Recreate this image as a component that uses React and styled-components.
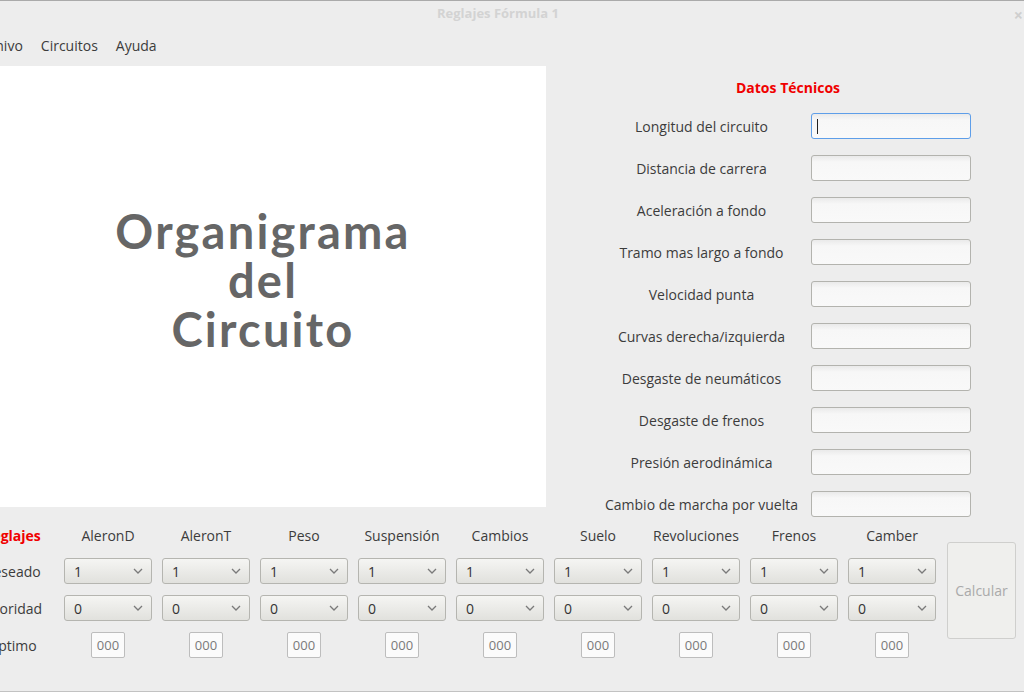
import React from 'react';
import styled, {createGlobalStyle, css} from 'styled-components';

const GlobalStyle = createGlobalStyle`
	html, body {
		margin: 0;
		padding: 0;
		background: #ededed;
		overflow: hidden;
	}
	* {
		box-sizing: border-box;
	}
`;

const Window = styled.div`
	width: 1024px;
	height: 692px;
	display: flex;
	flex-direction: column;
	background: #ededed;
	border-top: 1px solid #aaaaaa;
	border-bottom: 1px solid #c2c2c2;
	font-family: "Open Sans", "Noto Sans", sans-serif;
	font-size: 13px;
	color: #3c3c3c;
	overflow: hidden;
`;

const TitleBar = styled.div`
	position: relative;
	height: 27px;
	flex: 0 0 27px;
	display: flex;
	align-items: center;
	justify-content: center;
	padding-right: 28px;
	padding-bottom: 3px;
	font-weight: 700;
	font-size: 13px;
	color: #d3d3d3;
`;

const Close = styled.span`
	position: absolute;
	right: 1px;
	top: 3px;
	font-size: 16px;
	font-weight: 700;
	color: #cfcfcf;
`;

const MenuBar = styled.div`
	height: 35px;
	flex: 0 0 35px;
	display: flex;
	align-items: center;
	gap: 18px;
	margin-left: -26px;
	font-size: 14px;
`;

const Main = styled.div`
	display: flex;
	height: 441px;
	flex: 0 0 441px;
	margin-top: 3px;
`;

const Canvas = styled.div`
	width: 546px;
	flex: 0 0 546px;
	background: #ffffff;
	display: flex;
	align-items: center;
	justify-content: center;
`;

const Logo = styled.div`
	font-family: Lato, "Open Sans", sans-serif;
	font-weight: 700;
	font-size: 47px;
	line-height: 49px;
	letter-spacing: 2.2px;
	text-align: center;
	color: #666666;
	margin-top: -12px;
	margin-left: -20px;
`;

const Datos = styled.div`
	display: grid;
	grid-template-columns: 215px 160px;
	grid-template-rows: 19px repeat(10, 26px);
	row-gap: 16px;
	align-items: center;
	margin-left: 50px;
	padding-top: 12px;
`;

const SectionTitle = styled.div`
	color: #f00000;
	font-weight: 700;
	font-size: 14px;
	white-space: nowrap;
	${props => props.span ? css`
		grid-column: 1 / -1;
		text-align: center;
		padding-left: 9px;
	` : css`
		text-align: center;
	`}
`;

const FieldLabel = styled.label`
	text-align: center;
	font-size: 14px;
	white-space: nowrap;
	padding-right: 4px;
`;

const TextField = styled.div`
	height: 26px;
	border: 1px solid ${props => props.focused ? '#5e9ee9' : '#b3b3ae'};
	border-radius: 3px;
	background: linear-gradient(#eaeaea, #f7f7f7 6px, #f9f9f9);
	position: relative;
	${props => props.focused && css`
		&::after {
			content: '';
			position: absolute;
			left: 5px;
			top: 5px;
			width: 1px;
			height: 15px;
			background: #222;
		}
	`}
`;

const Reglajes = styled.div`
	display: grid;
	grid-template-columns: 84px repeat(9, 88px) 69px;
	grid-template-rows: 24px 26px 26px 26px;
	column-gap: 10px;
	row-gap: 11px;
	align-items: center;
	margin-left: -30px;
	margin-top: 16px;
`;

const RowLabel = styled.div`
	text-align: center;
	font-size: 14px;
	white-space: nowrap;
`;

const ColHeader = styled.div`
	text-align: center;
	font-size: 14px;
	white-space: nowrap;
`;

const Combo = styled.div`
	height: 26px;
	display: flex;
	align-items: center;
	justify-content: space-between;
	padding: 0 8px 0 9px;
	border: 1px solid #b5b5b0;
	border-radius: 3px;
	background: linear-gradient(#f5f5f3, #e1e1dd);
	font-size: 14px;
	color: #333;
`;

const Optimo = styled.div`
	justify-self: center;
	width: 34px;
	height: 26px;
	border: 1px solid #bdbdbd;
	border-radius: 2px;
	background: #fbfbfb;
	display: flex;
	align-items: center;
	justify-content: center;
	font-size: 13px;
	color: #7a7a7a;
`;

const Calcular = styled.button`
	grid-column: 11;
	grid-row: 1 / 5;
	align-self: center;
	margin-left: 1px;
	height: 97px;
	width: 69px;
	border: 1px solid #cfcfcd;
	border-radius: 3px;
	background: #efefed;
	color: #aaaaaa;
	font-family: inherit;
	font-size: 14px;
	padding: 0;
`;

const Chevron = () => (
  <svg width="10" height="6" viewBox="0 0 10 6">
    <path d="M1 1l4 4 4-4" fill="none" stroke="#7a7a7a" strokeWidth="1.3"/>
  </svg>
);

const datos = [
  'Longitud del circuito',
  'Distancia de carrera',
  'Aceleración a fondo',
  'Tramo mas largo a fondo',
  'Velocidad punta',
  'Curvas derecha/izquierda',
  'Desgaste de neumáticos',
  'Desgaste de frenos',
  'Presión aerodinámica',
  'Cambio de marcha por vuelta'
];

const columnas = ['AleronD', 'AleronT', 'Peso', 'Suspensión', 'Cambios', 'Suelo', 'Revoluciones', 'Frenos', 'Camber'];

export default function App() {
  return <Window>
    <GlobalStyle/>
    <TitleBar>
      Reglajes Fórmula 1
      <Close>×</Close>
    </TitleBar>
    <MenuBar>
      <span>Archivo</span>
      <span>Circuitos</span>
      <span>Ayuda</span>
    </MenuBar>
    <Main>
      <Canvas>
        <Logo>Organigrama<br/>del<br/>Circuito</Logo>
      </Canvas>
      <Datos>
        <SectionTitle span>Datos Técnicos</SectionTitle>
        {datos.map((d, i) => <React.Fragment key={d}>
          <FieldLabel>{d}</FieldLabel>
          <TextField focused={i === 0}/>
        </React.Fragment>)}
      </Datos>
    </Main>
    <Reglajes>
      <SectionTitle>Reglajes</SectionTitle>
      {columnas.map(c => <ColHeader key={c}>{c}</ColHeader>)}
      <Calcular disabled>Calcular</Calcular>
      <RowLabel>Deseado</RowLabel>
      {columnas.map(c => <Combo key={c}>1<Chevron/></Combo>)}
      <RowLabel>Prioridad</RowLabel>
      {columnas.map(c => <Combo key={c}>0<Chevron/></Combo>)}
      <RowLabel>Optimo</RowLabel>
      {columnas.map(c => <Optimo key={c}>000</Optimo>)}
    </Reglajes>
  </Window>;
}
